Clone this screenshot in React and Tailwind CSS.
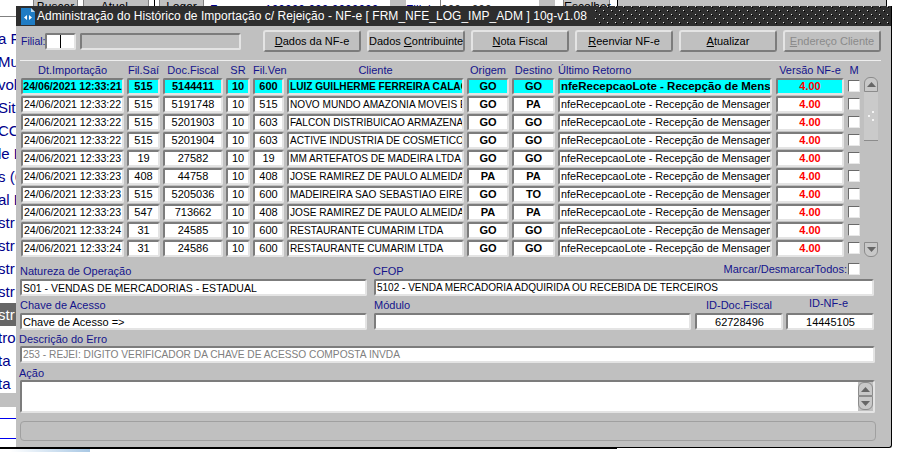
import React from 'react'

const FONT = "font-['Liberation_Sans',Arial,sans-serif]"
const BEVEL = 'border-2 border-t-[#7c7c7c] border-l-[#7c7c7c] border-r-[#e4e4e4] border-b-[#e4e4e4] rounded-[2px]'
const LABEL = 'text-[11px] leading-[14px] text-[#14148c] whitespace-nowrap'

const ROWS = [
  ['24/06/2021 12:33:21', '515', '5144411', '10', '600', 'LUIZ GUILHERME FERREIRA CALAÇA', 'GO', 'GO'],
  ['24/06/2021 12:33:22', '515', '5191748', '10', '515', 'NOVO MUNDO AMAZONIA MOVEIS E', 'GO', 'PA'],
  ['24/06/2021 12:33:22', '515', '5201903', '10', '603', 'FALCON DISTRIBUICAO ARMAZENAMENTO', 'GO', 'GO'],
  ['24/06/2021 12:33:22', '515', '5201904', '10', '603', 'ACTIVE INDUSTRIA DE COSMETICOS S', 'GO', 'GO'],
  ['24/06/2021 12:33:23', '19', '27582', '10', '19', 'MM ARTEFATOS DE MADEIRA LTDA', 'GO', 'GO'],
  ['24/06/2021 12:33:23', '408', '44758', '10', '408', 'JOSE RAMIREZ DE PAULO ALMEIDA', 'PA', 'PA'],
  ['24/06/2021 12:33:23', '515', '5205036', '10', '600', 'MADEIREIRA SAO SEBASTIAO EIRELI', 'GO', 'TO'],
  ['24/06/2021 12:33:23', '547', '713662', '10', '408', 'JOSE RAMIREZ DE PAULO ALMEIDA', 'PA', 'PA'],
  ['24/06/2021 12:33:24', '31', '24585', '10', '600', 'RESTAURANTE CUMARIM LTDA', 'GO', 'GO'],
  ['24/06/2021 12:33:24', '31', '24586', '10', '600', 'RESTAURANTE CUMARIM LTDA', 'GO', 'GO'],
]

const SIDE = ['a Fi', 'Mu', 'volu', 'Sit', 'CC', 'le D', 's (6', 'al E', 'str', 'str', 'str', 'str', 'str', 'tro', 'ta', 'ta']

function Cell({ className = '', size = 'text-[11px]', bold, active, children }) {
  return (
    <div className={`${BEVEL} h-[17px] shrink-0 overflow-hidden whitespace-nowrap leading-[13px] ${size} ${active ? 'bg-[#00ffff]' : 'bg-white'} ${bold ? 'font-bold' : ''} ${className}`}>
      {children}
    </div>
  )
}

function Btn({ disabled, children }) {
  return (
    <button className={`w-[98px] h-[22px] shrink-0 whitespace-nowrap border-2 border-t-[#e4e4e4] border-l-[#e4e4e4] border-r-[#7c7c7c] border-b-[#7c7c7c] rounded-[3px] text-[11px] leading-[16px] ${disabled ? 'text-[#8a8a8a]' : 'text-black'}`}>
      {children}
    </button>
  )
}

function Check() {
  return <div className="w-[12px] h-[12px] shrink-0 border border-t-[#6a6a6a] border-l-[#6a6a6a] border-r-[#e8e8e8] border-b-[#e8e8e8] bg-white" />
}

function Arrow({ up, small }) {
  return (
    <div className={`${small ? 'w-[15px] h-[14px]' : 'w-[14px] h-[15px]'} flex items-center justify-center bg-[#c8c8c8] border border-[#8c8c8c] ${up ? 'rounded-t-[6px]' : 'rounded-b-[6px]'}`}>
      <svg width="9" height="5" viewBox="0 0 9 5">
        <path d={up ? 'M4.5 0 9 5H0z' : 'M0 0h9L4.5 5z'} fill="#666666" />
      </svg>
    </div>
  )
}

function TitleIcon() {
  return (
    <svg width="14" height="17" viewBox="0 0 14 17" className="shrink-0">
      <path d="M0 0h10l4 4v13H0z" fill="#1f7cc4" />
      <path d="M10 0l4 4h-4z" fill="#bcd9ef" />
      <path d="M3 9.5 6 7v5zM11 9.5 8 7v5z" fill="#ffffff" />
    </svg>
  )
}

function TitleDots() {
  return (
    <svg className="flex-1 h-[20px] min-w-0" aria-hidden="true">
      <defs>
        <pattern id="title-dots" width="8" height="8" patternUnits="userSpaceOnUse">
          <rect x="0" y="4" width="1" height="1" fill="#e0e0e0" />
          <rect x="1" y="5" width="1" height="1" fill="#000000" />
          <rect x="4" y="0" width="1" height="1" fill="#e0e0e0" />
          <rect x="5" y="1" width="1" height="1" fill="#000000" />
        </pattern>
      </defs>
      <rect width="100%" height="100%" fill="url(#title-dots)" />
    </svg>
  )
}

function Background() {
  return (
    <div className="h-[452px] w-[916px] bg-white overflow-hidden">
      <div className="flex h-[6px] overflow-hidden bg-white text-[12px] leading-[14px]">
        <div className="w-[33px]" />
        <div className="w-[45px] border-x border-[#808080] bg-[#c0c0c0] text-center">Buscar</div>
        <div className="w-[5px]" />
        <div className="w-[66px] border-x border-[#808080] bg-[#c0c0c0] text-center">Atual. Menu</div>
        <div className="w-[5px]" />
        <div className="w-[1px] bg-black" />
        <div className="w-[4px]" />
        <div className="w-[45px] border-x border-[#808080] bg-[#c0c0c0] text-center">Logar</div>
        <div className="w-[6px]" />
        <div className="w-[55px] text-[#00008b] pt-[3px]">F</div>
        <div className="w-[125px] text-[#00008b] pt-[3px] overflow-hidden whitespace-nowrap">100000 000 0000000</div>
        <div className="w-[16px] bg-[#c0c0c0]" />
        <div className="w-[34px] text-[#00008b] pt-[3px]">Filial</div>
        <div className="w-[99px] border-l border-[#808080] pt-[3px] text-[#333333]">000 - 000</div>
        <div className="w-[16px] bg-[#c0c0c0]" />
        <div className="w-[8px]" />
        <div className="w-[47px] border-x border-[#808080] bg-[#c0c0c0] text-center">Escolher</div>
        <div className="w-[7px]" />
        <div className="w-[1px] bg-black" />
        <div className="w-[268px] bg-[#c0c0c0]" />
        <div className="w-[1px] bg-black" />
      </div>
      <div className="h-[10px]" />
      <div className="h-px w-[16px] bg-[#808080]" />
      <div className="flex flex-col mt-[10px] w-[16px] overflow-hidden">
        {SIDE.map((s, i) => (
          <div key={i} className={`h-[23px] w-[40px] -ml-[2px] text-[15px] leading-[23px] whitespace-nowrap ${i === 12 ? 'bg-[#666666] text-white' : 'text-[#00008b]'}`}>
            {s}
          </div>
        ))}
      </div>
      <div className="h-[14px] w-[16px] -mt-[2px] bg-[#c0c0c0]" />
      <div className="h-[11px]" />
      <div className="h-px w-[16px] bg-[#0000ee]" />
      <div className="h-[19px]" />
      <div className="h-px w-[16px] bg-[#0000ee]" />
      <div className="h-[8px]" />
      <div className="h-[2px] w-[617px] bg-black" />
      <div className="h-[3px] w-[80px] ml-[10px] bg-gradient-to-r from-white to-[#a9c8e4]" />
    </div>
  )
}

function Row({ data, active }) {
  return (
    <div className="flex gap-[3px]">
      <Cell bold={active} active={active} size="text-[10.6px]" className="w-[103px] text-center">{data[0]}</Cell>
      <Cell bold={active} active={active} className="w-[33px] text-center">{data[1]}</Cell>
      <Cell bold={active} active={active} className="w-[60px] text-center">{data[2]}</Cell>
      <Cell bold={active} active={active} className="w-[24px] text-center">{data[3]}</Cell>
      <Cell bold={active} active={active} className="w-[31px] text-center">{data[4]}</Cell>
      <Cell bold={active} active={active} size="text-[10.1px]" className="w-[177px] pl-px">{data[5]}</Cell>
      <Cell bold active={active} className="w-[42px] text-center">{data[6]}</Cell>
      <Cell bold active={active} className="w-[43px] text-center">{data[7]}</Cell>
      <Cell bold={active} active={active} size={active ? 'text-[11.5px]' : 'text-[10.8px]'} className="w-[214px] pl-px">nfeRecepcaoLote - Recepção de Mensagem</Cell>
      <Cell bold active={active} className="w-[68px] ml-px text-center text-[#ff0000]">4.00</Cell>
      <div className="ml-px pt-[2px]"><Check /></div>
    </div>
  )
}

function Header() {
  const cols = [
    ['w-[103px]', 'Dt.Importação'],
    ['w-[33px]', 'Fil.Saí'],
    ['w-[60px]', 'Doc.Fiscal'],
    ['w-[24px]', 'SR'],
    ['w-[31px]', 'Fil.Ven'],
    ['w-[177px]', 'Cliente'],
    ['w-[42px]', 'Origem'],
    ['w-[43px]', 'Destino'],
  ]
  return (
    <div className="flex gap-[3px] h-[16px] pt-[2px]">
      {cols.map(([w, t]) => (
        <div key={t} className={`${w} shrink-0 text-center ${LABEL}`}>{t}</div>
      ))}
      <div className={`w-[214px] shrink-0 ${LABEL}`}>Último Retorno</div>
      <div className={`w-[68px] ml-px shrink-0 text-center ${LABEL}`}>Versão NF-e</div>
      <div className={`w-[12px] ml-px shrink-0 text-center ${LABEL}`}>M</div>
    </div>
  )
}

function Scrollbar() {
  return (
    <div className="w-[14px] ml-[4px] mt-[16px] h-[180px] flex flex-col">
      <Arrow up />
      <div className="h-[49px] bg-[#cacaca] border-b border-[#8c8c8c] flex items-center justify-center">
        <svg width="8" height="10" viewBox="0 0 8 10">
          <rect x="5" y="0" width="2" height="2" fill="#f4f4f4" />
          <rect x="1" y="4" width="2" height="2" fill="#f4f4f4" />
          <rect x="5" y="8" width="2" height="2" fill="#f4f4f4" />
        </svg>
      </div>
      <div className="flex-1" />
      <Arrow />
    </div>
  )
}

function Field({ className = '', children }) {
  return (
    <div className={`${BEVEL} h-[17px] shrink-0 overflow-hidden whitespace-nowrap bg-white pl-[1px] leading-[14px] ${className}`}>
      {children}
    </div>
  )
}

function ImportWindow() {
  return (
    <div className={`absolute left-[16px] top-[6px] w-[876px] h-[442px] bg-[#c0c0c0] border-r border-b border-black rounded-tl-[3px] rounded-br-[3px] ${FONT}`}>
      <div className="flex items-center h-[20px] bg-[#2e2e2e] pl-[5px] pr-[2px]">
        <TitleIcon />
        <div className="ml-[2px] mr-[8px] text-[12px] leading-[20px] tracking-[0.04px] text-white whitespace-nowrap">
          Administração do Histórico de Importação c/ Rejeição - NF-e [ FRM_NFE_LOG_IMP_ADM ] 10g-v1.08
        </div>
        <TitleDots />
      </div>

      <div className="flex items-center h-[22px] mt-[4px]">
        <div className="ml-[5px] w-[24px] text-[10.5px] leading-[14px] text-[#14148c]">Filial:</div>
        <div className={`${BEVEL} h-[17px] w-[31px] bg-white flex justify-center`}>
          <div className="w-px bg-black" />
        </div>
        <div className={`${BEVEL} h-[17px] w-[161px] ml-[4px]`} />
        <div className="flex gap-[6px] ml-[22px]">
          <Btn><u>D</u>ados da NF-e</Btn>
          <Btn>Dados <u>C</u>ontribuinte</Btn>
          <Btn><u>N</u>ota Fiscal</Btn>
          <Btn><u>R</u>eenviar NF-e</Btn>
          <Btn><u>A</u>tualizar</Btn>
          <Btn disabled><u>E</u>ndereço Cliente</Btn>
        </div>
      </div>

      <div className="ml-[4px] mt-[8px] w-[861px] h-px bg-[#eeeeee]" />

      <div className="flex pl-[5px]">
        <div className="flex flex-col gap-px">
          <Header />
          {ROWS.map((r, i) => (
            <Row key={i} data={r} active={i === 0} />
          ))}
        </div>
        <Scrollbar />
      </div>

      <div className="flex pl-[4px] pr-[31px] h-[24px]">
        <div className={`w-[353px] pt-[7px] ${LABEL}`}>Natureza de Operação</div>
        <div className={`pt-[7px] ${LABEL}`}>CFOP</div>
        <div className="flex-1 flex justify-end items-center h-[12px] mt-[6px]">
          <div className={`${LABEL} mr-px`}>Marcar/DesmarcarTodos:</div>
          <Check />
        </div>
      </div>

      <div className="flex gap-[7px] pl-[4px] -mt-[2px]">
        <Field className="w-[347px] text-[10.5px]">S01 - VENDAS DE MERCADORIAS - ESTADUAL</Field>
        <Field className="w-[500px] text-[10px]">5102 - VENDA MERCADORIA ADQUIRIDA OU RECEBIDA DE TERCEIROS</Field>
      </div>

      <div className="flex pl-[4px] h-[17px] items-center">
        <div className={`w-[354px] ${LABEL}`}>Chave de Acesso</div>
        <div className={`w-[321px] ${LABEL}`}>Módulo</div>
        <div className={`w-[88px] text-center ${LABEL}`}>ID-Doc.Fiscal</div>
        <div className={`w-[91px] text-center -mt-[4px] ${LABEL}`}>ID-NF-e</div>
      </div>

      <div className="flex pl-[4px]">
        <Field className="w-[347px] text-[11px]">Chave de Acesso =&gt;</Field>
        <Field className="w-[317px] ml-[7px]" />
        <Field className="w-[88px] ml-[4px] text-center text-[11px]">62728496</Field>
        <Field className="w-[88px] ml-[3px] text-center text-[11px]">14445105</Field>
      </div>

      <div className={`pl-[3px] h-[16px] pt-[2px] ${LABEL}`}>Descrição do Erro</div>
      <Field className="ml-[4px] w-[855px] text-[10.2px] text-[#808080]">253 - REJEI: DIGITO VERIFICADOR DA CHAVE DE ACESSO COMPOSTA INVDA</Field>

      <div className={`pl-[3px] h-[17px] pt-[3px] ${LABEL}`}>Ação</div>
      <div className={`${BEVEL} ml-[4px] w-[855px] h-[33px] bg-white flex justify-end`}>
        <div className="flex flex-col bg-[#c0c0c0]">
          <Arrow up small />
          <Arrow small />
        </div>
      </div>

      <div className="ml-[4px] mt-[8px] w-[856px] h-[20px] border border-[#a0a0a0] rounded-[4px]" />
    </div>
  )
}

export default function App() {
  return (
    <div className={`relative w-[916px] h-[452px] overflow-hidden ${FONT}`}>
      <Background />
      <ImportWindow />
    </div>
  )
}
